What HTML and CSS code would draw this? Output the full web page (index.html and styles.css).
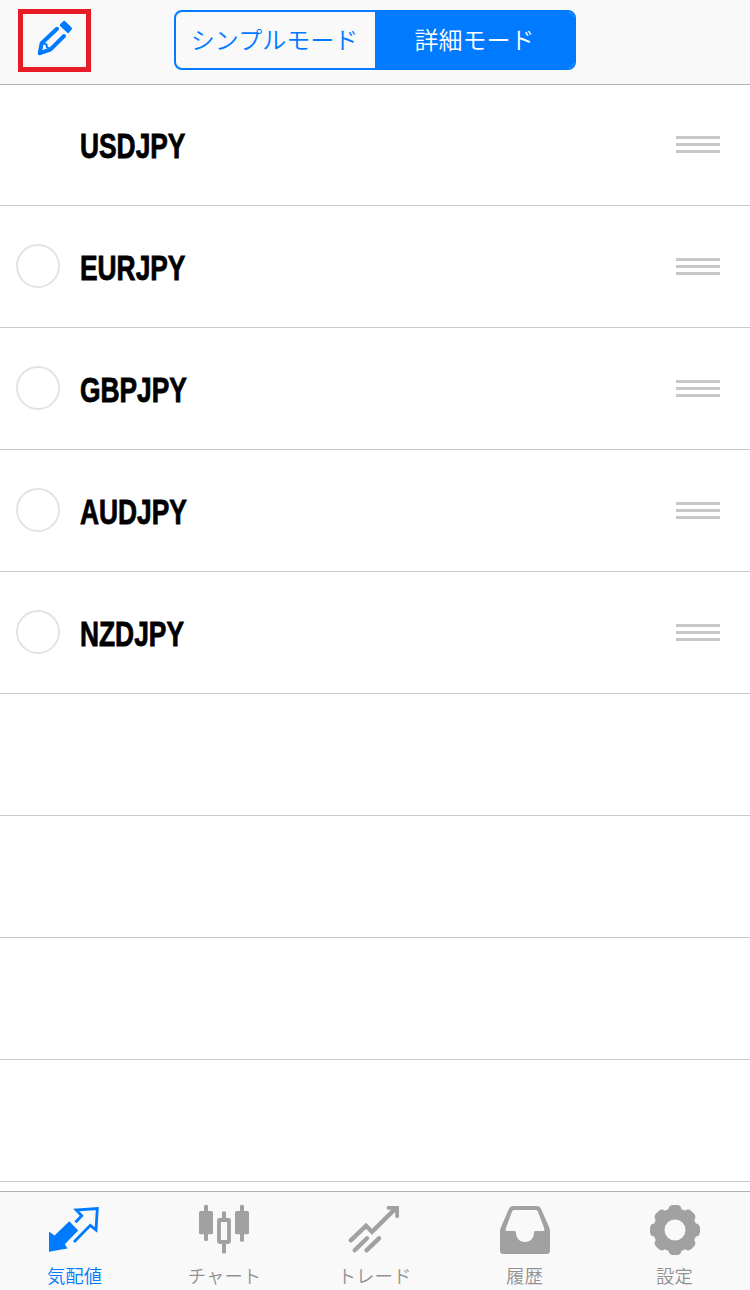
FILE: index.html
```html
<!DOCTYPE html>
<html lang="ja">
<head>
    <meta charset="UTF-8">
    <meta name="viewport" content="width=device-width, initial-scale=1.0">
    <title>気配値</title>
    <link rel="stylesheet" href="styles.css">
</head>
<body>
    <!-- header -->
    <header class="header">
        <button class="edit" aria-label="編集">
            <svg width="63" height="53" viewBox="0 0 63 53">
                <path class="solid" d="M37.1 10.3L40.2 7.2Q41.2 6.2 42.2 7.2L48.6 13.6Q49.6 14.6 48.6 15.6L46 18.8Q45.2 19.6 44.2 18.8L37.1 12Q36.3 11.2 37.1 10.3z"/>
                <path class="pencil" d="M34.1 14.8L18.6 29.3L16.8 39.2L27.3 35.6L41 22"/>
                <path class="pencil pencil--thin" d="M19 29L23.4 30.4L24 33.4L27.5 35"/>
                <path class="solid" d="M15 41.2L16 34.5L21.5 39.6z"/>
            </svg>
        </button>
        <div class="segment">
            <button class="mode">シンプルモード</button>
            <button class="mode mode--active">詳細モード</button>
        </div>
    </header>

    <!-- symbols -->
    <ul class="list">
        <li class="row"><span class="check check--none"></span><span class="symbol">USDJPY</span><span class="handle"></span></li>
        <li class="row"><span class="check"></span><span class="symbol">EURJPY</span><span class="handle"></span></li>
        <li class="row"><span class="check"></span><span class="symbol">GBPJPY</span><span class="handle"></span></li>
        <li class="row"><span class="check"></span><span class="symbol">AUDJPY</span><span class="handle"></span></li>
        <li class="row"><span class="check"></span><span class="symbol">NZDJPY</span><span class="handle"></span></li>
        <li class="row"></li>
        <li class="row"></li>
        <li class="row"></li>
        <li class="row"></li>
    </ul>

    <!-- tabs -->
    <nav class="tabs">
        <a class="tab tab--active">
            <svg class="icon" viewBox="0 0 60 56">
                <path class="solid" d="M4 31.5L9.5 35.5L24.3 21.2L33.2 30.5L19.8 44.3L22.5 48.6L4 51.8z"/>
                <path class="line line--thin" d="M30.5 22.2L36.7 15.7L31.2 10L52.3 8.5L51 30L45.3 25.3L29 42"/>
            </svg>
            <span class="label">気配値</span>
        </a>
        <a class="tab">
            <svg class="icon" viewBox="0 0 60 56">
                <rect class="solid" x="9" y="4.8" width="4" height="36.2" rx="1.5"/>
                <rect class="solid" x="4" y="11" width="14" height="23.3" rx="1.5"/>
                <rect class="solid" x="27" y="11.3" width="4" height="10" rx="1.5"/>
                <rect class="solid" x="27" y="42" width="4" height="11.5" rx="1.5"/>
                <rect class="line" x="24" y="20" width="10" height="22" rx=".5"/>
                <rect class="solid" x="45" y="4.8" width="4" height="37" rx="1.5"/>
                <rect class="solid" x="40" y="11" width="14" height="23.3" rx="1.5"/>
            </svg>
            <span class="label">チャート</span>
        </a>
        <a class="tab">
            <svg class="icon" viewBox="0 0 60 56">
                <path class="line line--thick" d="M5.8 40.3L21 25.8L27 31.8L50.5 8.5M9.7 50.3L22 38.3M21.5 50.3L34 38.3"/>
                <path class="solid" d="M42.5 6H52.8Q54 6 54 7.2V17.2Q52 18.8 50.3 17V13L46.5 9.7H42.5Q40.8 7.8 42.5 6z"/>
            </svg>
            <span class="label">トレード</span>
        </a>
        <a class="tab">
            <svg class="icon" viewBox="0 0 60 56">
                <path class="solid" fill-rule="evenodd" d="M18 6H42Q45 6 46 8.7L54 27Q55 29.5 55 32V50.5Q55 54 51.5 54H8.5Q5 54 5 50.5V32Q5 29.5 6 27L14 8.7Q15 6 18 6zM19 10Q17.5 10 17 11.5L10.6 29Q10.2 31 12 31H19.5Q21 31 21 32.5C21 38 24.5 42 30 42S39 38 39 32.5Q39 31 40.5 31H48Q49.8 31 49.4 29L43 11.5Q42.5 10 41 10z"/>
            </svg>
            <span class="label">履歴</span>
        </a>
        <a class="tab">
            <svg class="icon" viewBox="0 0 60 56">
                <g class="solid">
                    <circle cx="30" cy="30" r="21.8"/>
                    <rect x="23.5" y="5" width="13" height="50" rx="4.5"/>
                    <rect x="23.5" y="5" width="13" height="50" rx="4.5" transform="rotate(45 30 30)"/>
                    <rect x="23.5" y="5" width="13" height="50" rx="4.5" transform="rotate(90 30 30)"/>
                    <rect x="23.5" y="5" width="13" height="50" rx="4.5" transform="rotate(135 30 30)"/>
                </g>
                <circle class="hole" cx="30" cy="30" r="10.5"/>
            </svg>
            <span class="label">設定</span>
        </a>
    </nav>
</body>
</html>
```
FILE: styles.css
```css
* {box-sizing: border-box;}
body {
    margin: 0; height: 1290px; overflow: hidden; background-color: #fff;
    display: flex; flex-direction: column;
    font-family: "Noto Sans CJK JP", "Liberation Sans", sans-serif;
}
button {font-family: inherit; padding: 0; margin: 0; background: none; border: none; cursor: pointer;}

.header {
    height: 85px; flex: none; padding: 9px 18px 0; border-bottom: 1px solid #b2b2b2; background-color: #f9f9f9;
    display: flex; align-items: flex-start; gap: 83px;
}
.edit {width: 73px; height: 63px; border: 5px solid #e81c27; color: #007aff;}
.edit svg {display: block;}
.pencil {fill: none; stroke: currentColor; stroke-width: 4; stroke-linecap: round; stroke-linejoin: round;}
.pencil--thin {stroke-width: 2;}
.segment {
    width: 402px; height: 60px; margin-top: 1px; border: 2px solid #007aff; border-radius: 8px; overflow: hidden;
    display: flex; background-color: #f9f9f9;
}
.mode {flex: 1; font-size: 24px; font-weight: 350; line-height: 54px; padding: 0 2px 2px 0; color: #007aff;}
.mode--active {flex: 0 0 199px; padding-right: 0; color: #fff; background-color: #007aff;}

.list {flex: 1; min-height: 0; margin: 0; padding: 0; list-style: none; overflow: hidden;}
.row {
    height: 122px; padding: 0 30px 1px 16px; border-bottom: 1px solid #c8c7cc;
    display: flex; align-items: center;
}
.row:first-child {height: 121px;}
.check {width: 44px; height: 44px; border: 2px solid #e3e3e3; border-radius: 50%;}
.check--none {visibility: hidden;}
.symbol {
    margin: 2px 0 0 20px; font: bold 34px/40px "Liberation Sans", Arial, sans-serif; color: #000;
    -webkit-text-stroke: .8px #000;
    transform: scale(.775, 1.03); transform-origin: left;
}
.row + .row .symbol {margin-top: 4px;}
.handle {
    width: 44px; height: 17px; margin-left: auto;
    border-top: 3px solid #c7c7c7; border-bottom: 3px solid #c7c7c7;
    background: linear-gradient(#c7c7c7, #c7c7c7) 0 4px / 100% 3px no-repeat;
}

.tabs {
    height: 99px; flex: none; border-top: 1px solid #b2b2b2; background-color: #f9f9f9;
    display: flex;
}
.tab {flex: 1; padding-top: 8px; color: #929292; display: flex; flex-direction: column; align-items: center;}
.tab--active {color: #007aff;}
.icon {width: 60px; height: 56px; display: block; color: #a1a1a1;}
.tab--active .icon {color: #007aff;}
.label {font-size: 18.4px; font-weight: 350; line-height: 26px; margin: 6px 1px 0 0;}
.solid {fill: currentColor;}
.line {fill: none; stroke: currentColor; stroke-width: 3.8;}
.line--thin {stroke-width: 2.8;}
.line--thick {stroke-width: 4.4; stroke-linecap: round;}
.hole {fill: #f9f9f9;}
```
